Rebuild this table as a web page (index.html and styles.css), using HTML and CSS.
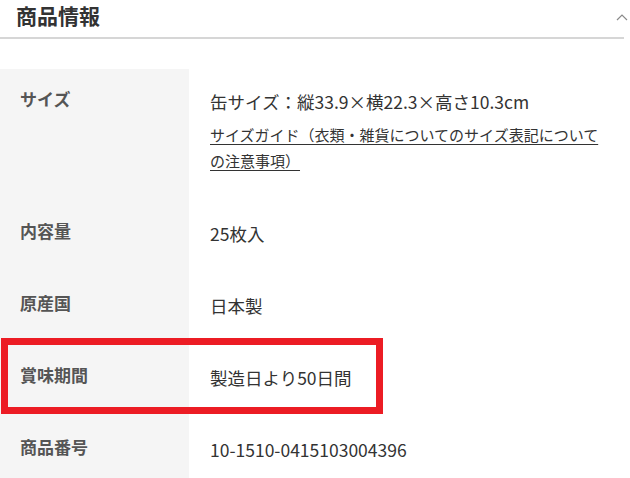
FILE: index.html
```html
<!DOCTYPE html>
<html lang="ja">
<head>
<meta charset="utf-8">
<title>商品情報</title>
<link rel="stylesheet" href="styles.css">
</head>
<body>
<section class="spec">
  <div class="spec-head">
    <h2 class="spec-title">商品情報</h2>
    <svg class="chev" width="12" height="8" viewBox="0 0 12 8"><path d="M1 7 L6 2 L11 7" fill="none" stroke="#8a8a8a" stroke-width="1.2"/></svg>
  </div>
  <div class="spec-rule"></div>
  <table class="spec-table">
    <tr>
      <th>サイズ</th>
      <td>
        <div>缶サイズ：縦33.9×横22.3×高さ10.3cm</div>
        <a class="guide" href="#">サイズガイド（衣類・雑貨についてのサイズ表記についての注意事項）</a>
      </td>
    </tr>
    <tr><th>内容量</th><td>25枚入</td></tr>
    <tr><th>原産国</th><td>日本製</td></tr>
    <tr><th>賞味期間</th><td>製造日より50日間</td></tr>
    <tr><th>商品番号</th><td>10-1510-0415103004396</td></tr>
  </table>
  <div class="highlight"></div>
</section>
</body>
</html>
```
FILE: styles.css
```css
html, body {
  margin: 0;
  padding: 0;
  background: #fff;
}
body {
  font-family: "Noto Sans CJK JP", "Noto Sans", sans-serif;
  color: #333;
  width: 630px;
  height: 478px;
  overflow: hidden;
}
.spec {
  position: relative;
}
.spec-head {
  display: flex;
  justify-content: space-between;
  align-items: flex-start;
  height: 37px;
  padding-left: 16px;
}
.spec-title {
  margin: 0;
  font-size: 21px;
  font-weight: 700;
  line-height: 30px;
  color: #333;
}
.chev {
  margin-top: 13px;
  margin-right: 2px;
}
.spec-rule {
  width: 624px;
  height: 2px;
  background: #d6d6d6;
}
.spec-table {
  margin-top: 30px;
  border-collapse: collapse;
  width: 630px;
}
.spec-table th {
  width: 189px;
  box-sizing: border-box;
  background: #f5f5f5;
  color: #555;
  font-size: 17px;
  font-weight: 700;
  line-height: 24px;
  text-align: left;
  vertical-align: top;
  padding: 18px 20px 30px 20px;
}
.spec-table td {
  vertical-align: top;
  font-size: 17.5px;
  line-height: 24px;
  padding: 21px 20px 27px 21px;
  color: #333;
}
.guide {
  display: block;
  width: 396px;
  margin-top: 8px;
  font-size: 15px;
  line-height: 26px;
  color: #333;
  text-decoration: underline;
  text-underline-offset: 3px;
}
.highlight {
  position: absolute;
  left: 1px;
  top: 338px;
  width: 368px;
  height: 62px;
  border: 7px solid #ec1c24;
}
```
